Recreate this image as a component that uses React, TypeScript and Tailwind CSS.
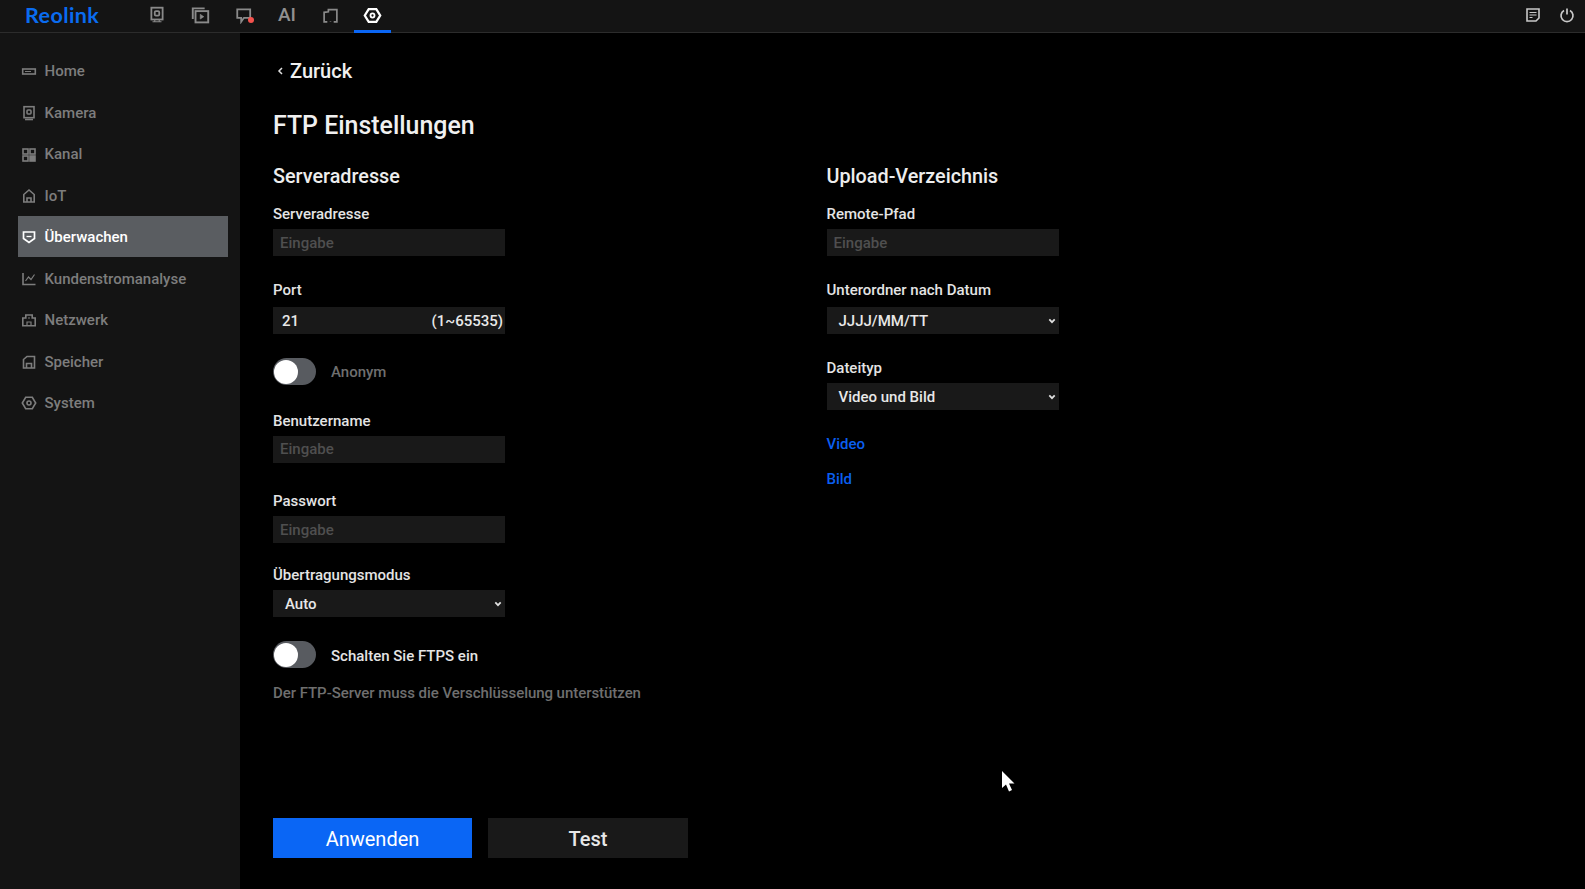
import React from "react";

const S = ({ size = 16, children, className = "" }: { size?: number; children: React.ReactNode; className?: string }) => (
  <svg width={size} height={size} viewBox="0 0 16 16" fill="none" stroke="currentColor" strokeWidth={1.6} className={className}>
    {children}
  </svg>
);

const Icons: Record<string, React.ReactNode> = {
  Home: (
    <S>
      <rect x="1.7" y="5" width="12.6" height="5" />
      <path d="M4 7.5h6" strokeWidth="1" />
    </S>
  ),
  Kamera: (
    <S>
      <rect x="3" y="1.7" width="10" height="11" />
      <rect x="6" y="5" width="4" height="4" rx="1" />
      <path d="M4 14.5h8" />
    </S>
  ),
  Kanal: (
    <S>
      <rect x="2" y="2" width="5" height="5" />
      <rect x="9" y="2" width="5" height="5" />
      <rect x="2" y="9" width="5" height="5" />
      <rect x="9" y="9" width="5" height="5" fill="currentColor" />
    </S>
  ),
  IoT: (
    <S>
      <path d="M2.8 14V6.5L8 2l5.2 4.5V14z" />
      <path d="M6 14v-4h4v4" />
    </S>
  ),
  "Überwachen": (
    <S>
      <path d="M2.5 3h11v6.5L8 13.5 2.5 9.5z" strokeWidth="1.7" />
      <path d="M5.5 7.5h5" strokeWidth="1.3" />
    </S>
  ),
  Kundenstromanalyse: (
    <S>
      <path d="M2 2v11.5h12.5" />
      <path d="M4.5 10l3-4 2.5 2.5 3.5-5" strokeWidth="1.2" />
    </S>
  ),
  Netzwerk: (
    <S>
      <path d="M1.8 13.7V6h3V3h6.400v3h3v7.700z" />
      <path d="M6 13.500V10h4v3.500" strokeWidth="1.200" />
      <path d="M7 6h2" strokeWidth="1.200" />
    </S>
  ),
  Speicher: (
    <S>
      <path d="M2.500 14V5.500L6 2.500h7.500V14z" />
      <path d="M5.500 14V9.500h5V14" />
    </S>
  ),
  System: (
    <S>
      <path d="M4.700 2.300h6.600L14.700 8l-3.400 5.700H4.700L1.300 8z" />
      <circle cx="8" cy="8" r="2" />
    </S>
  ),
};

const nav = ["Home", "Kamera", "Kanal", "IoT", "Überwachen", "Kundenstromanalyse", "Netzwerk", "Speicher", "System"];

function TopIcon({ w = 24, children, active = false, className = "" }: { w?: number; children: React.ReactNode; active?: boolean; className?: string }) {
  return (
    <div className={`relative flex h-full items-center justify-center pb-[2px] ${active ? "text-white" : "text-[#8a8a8a]"} ${className}`} style={{ width: w }}>
      {children}
      {active && <div className="absolute bottom-[-1px] left-0 right-0 h-[3px] bg-[#0a66f5]" />}
    </div>
  );
}

const Label = ({ children, className = "" }: { children: React.ReactNode; className?: string }) => (
  <div className={`text-[15px] leading-[18px] font-medium text-[#e4e4e4] ${className}`}>{children}</div>
);

const Field = ({ className = "", children }: { className?: string; children?: React.ReactNode }) => (
  <div className={`flex h-[27px] w-[232px] items-center bg-[#191919] pt-[1px] text-[15px] font-medium ${className}`}>{children}</div>
);

const Placeholder = () => <Field className="pl-[7px] text-[#4f4f4f]">Eingabe</Field>;

const Select = ({ value, className = "" }: { value: string; className?: string }) => (
  <Field className={`justify-between pl-[12px] pr-[3px] text-[#e8e8e8] ${className}`}>
    <span>{value}</span>
    <svg width="8" height="6" viewBox="0 0 8 6" fill="none" stroke="#e0e0e0" strokeWidth="1.700" className="mb-[1px]">
      <path d="M1.300 1.300L4 4.200l2.700-2.900" />
    </svg>
  </Field>
);

const Toggle = () => (
  <div className="flex h-[27px] w-[43px] items-center rounded-full bg-[#585b60] pl-[1px]">
    <div className="h-[24px] w-[24px] rounded-full bg-white" />
  </div>
);

export default function App() {
  return (
    <div className="relative flex h-[889px] w-[1585px] flex-col overflow-hidden bg-black font-['Roboto','Liberation_Sans',sans-serif]">
      <header className="flex h-[33px] shrink-0 items-stretch border-b border-[#2c2c2c] bg-[#141414] pl-[25px]">
        <div className="w-[120px] pt-[3px] text-[21.500px] leading-[24px] font-bold tracking-[0.4px] text-[#0a6cf0] font-['Lato',sans-serif]">Reolink</div>
        <div className="flex h-full gap-[19.300px]">
          <TopIcon>
            <S size={18}>
              <rect x="3" y="1.500" width="10" height="10.500" />
              <rect x="6" y="4.500" width="4" height="4" rx="1" />
              <path d="M4 14h8M6 12v2M10 12v2" strokeWidth="1" />
            </S>
          </TopIcon>
          <TopIcon>
            <S size={19}>
              <path d="M11.500 2H1.500v9" />
              <rect x="3.800" y="4.300" width="10.700" height="9.500" />
              <path d="M7.800 7v4l3-2z" fill="currentColor" strokeWidth="0.500" />
            </S>
          </TopIcon>
          <TopIcon>
            <div className="relative">
              <S size={18}>
                <path d="M2 3h11.500v7.500H8L5.500 14v-3.500H2z" />
              </S>
              <div className="absolute right-[-1px] bottom-[1px] h-[6px] w-[6px] rounded-full bg-[#f4524d]" />
            </div>
          </TopIcon>
          <TopIcon>
            <span className="text-[19px] font-medium text-[#909090]">AI</span>
          </TopIcon>
          <TopIcon>
            <S size={17}>
              <path d="M5 14H2V5l4-.500V2.500h8V14h-3" />
              <path d="M8 13.500v.5" strokeWidth="1.500" />
            </S>
          </TopIcon>
          <TopIcon w={37} active className="ml-[-7.500px]">
            <svg width="19" height="19" viewBox="0 0 16 16" fill="none" stroke="currentColor" strokeWidth="1.900">
              <path d="M4.800 2.600h6.400L14.500 8l-3.300 5.400H4.800L1.500 8z" />
              <circle cx="8" cy="8" r="1.700" strokeWidth="1.500" />
            </svg>
          </TopIcon>
        </div>
        <div className="ml-auto flex h-full items-center gap-[18px] pr-[10px] pb-[3px] text-[#c8c8c8]">
          <S size={16}>
            <path d="M2 2h12v9l-3 3H2z" />
            <path d="M4.500 5.500h7M4.500 8h7M4.500 10.500h3" strokeWidth="1.200" />
          </S>
          <S size={16}>
            <path d="M5 3.500a6 6 0 1 0 6 0" strokeWidth="1.700" />
            <path d="M8 1.500v6" strokeWidth="1.700" />
          </S>
        </div>
      </header>

      <div className="flex min-h-0 flex-1">
        <aside className="flex w-[240px] shrink-0 flex-col bg-[#141414] pt-[17px] pl-[18px]">
          {nav.map((n) => {
            const active = n === "Überwachen";
            return (
              <div
                key={n}
                className={`flex h-[41.450px] w-[210px] items-center gap-[7.500px] pt-[2px] pl-[3px] text-[15px] font-medium ${
                  active ? "bg-[#5a5d61] text-white" : "text-[#7d7d7d]"
                }`}
              >
                <span className="flex w-[16px] justify-center">{Icons[n]}</span>
                {n}
              </div>
            );
          })}
        </aside>

        <main className="flex min-w-0 flex-1 flex-col pl-[33px]">
          <div className="mt-[25px] flex h-[26px] items-center text-[20px] font-medium text-[#f0f0f0]">
            <svg width="15" height="10" viewBox="0 0 15 10" fill="none" stroke="#e0e0e0" strokeWidth="1.500" className="ml-[2px]">
              <path d="M7 2L4 5l3 3" />
            </svg>
            Zurück
          </div>
          <h1 className="mt-[27px] text-[24.900px] leading-[30px] font-medium text-[#f0f0f0]">FTP Einstellungen</h1>

          <div className="mt-[24px] flex gap-[321.500px]">
            <section className="flex w-[232px] flex-col">
              <h2 className="text-[19.800px] leading-[24px] font-medium whitespace-nowrap text-[#ededed]">Serveradresse</h2>
              <Label className="mt-[16px]">Serveradresse</Label>
              <div className="mt-[6px]"><Placeholder /></div>
              <Label className="mt-[25px]">Port</Label>
              <Field className="mt-[8px] justify-between pr-[2px] pl-[9px] text-[#e8e8e8]">
                <span>21</span>
                <span>(1~65535)</span>
              </Field>
              <div className="mt-[24px] flex items-center gap-[15px]">
                <Toggle />
                <span className="pt-[2px] text-[15px] font-medium whitespace-nowrap text-[#6f6f6f]">Anonym</span>
              </div>
              <Label className="mt-[26.500px]">Benutzername</Label>
              <div className="mt-[6px]"><Placeholder /></div>
              <Label className="mt-[29.500px]">Passwort</Label>
              <div className="mt-[6px]"><Placeholder /></div>
              <Label className="mt-[23px] whitespace-nowrap">Übertragungsmodus</Label>
              <Select value="Auto" className="mt-[6px]" />
              <div className="mt-[24px] flex items-center gap-[15px]">
                <Toggle />
                <span className="pt-[3px] text-[15px] font-medium whitespace-nowrap text-[#e4e4e4]">Schalten Sie FTPS ein</span>
              </div>
              <div className="mt-[16px] text-[15px] leading-[18px] font-medium tracking-[-0.05px] whitespace-nowrap text-[#6f6f6f]">
                Der FTP-Server muss die Verschlüsselung unterstützen
              </div>
            </section>

            <section className="flex w-[232px] flex-col">
              <h2 className="text-[19.800px] leading-[24px] font-medium whitespace-nowrap text-[#ededed]">Upload-Verzeichnis</h2>
              <Label className="mt-[16px]">Remote-Pfad</Label>
              <div className="mt-[6px]"><Placeholder /></div>
              <Label className="mt-[25px] whitespace-nowrap">Unterordner nach Datum</Label>
              <Select value="JJJJ/MM/TT" className="mt-[8px]" />
              <Label className="mt-[25px]">Dateityp</Label>
              <Select value="Video und Bild" className="mt-[6px]" />
              <div className="mt-[25px] text-[15px] leading-[18px] font-medium text-[#0a5ff0]">Video</div>
              <div className="mt-[16.500px] text-[15px] leading-[18px] font-medium text-[#0a5ff0]">Bild</div>
            </section>
          </div>

          <div className="mt-auto mb-[31px] flex gap-[16px]">
            <button className="h-[40px] w-[199px] bg-[#0a66f5] pt-[1px] text-[20px] text-white">Anwenden</button>
            <button className="h-[40px] w-[200px] bg-[#191919] pt-[1px] text-[20px] font-medium text-[#e8e8e8]">Test</button>
          </div>
        </main>
      </div>

      <svg className="absolute top-[770px] left-[1001px]" width="16" height="25" viewBox="0 0 16 25" fill="white">
        <path d="M1 1l0 17 4-3.500 3 7 3-1.500-3-6.500h5.500z" />
      </svg>
    </div>
  );
}
